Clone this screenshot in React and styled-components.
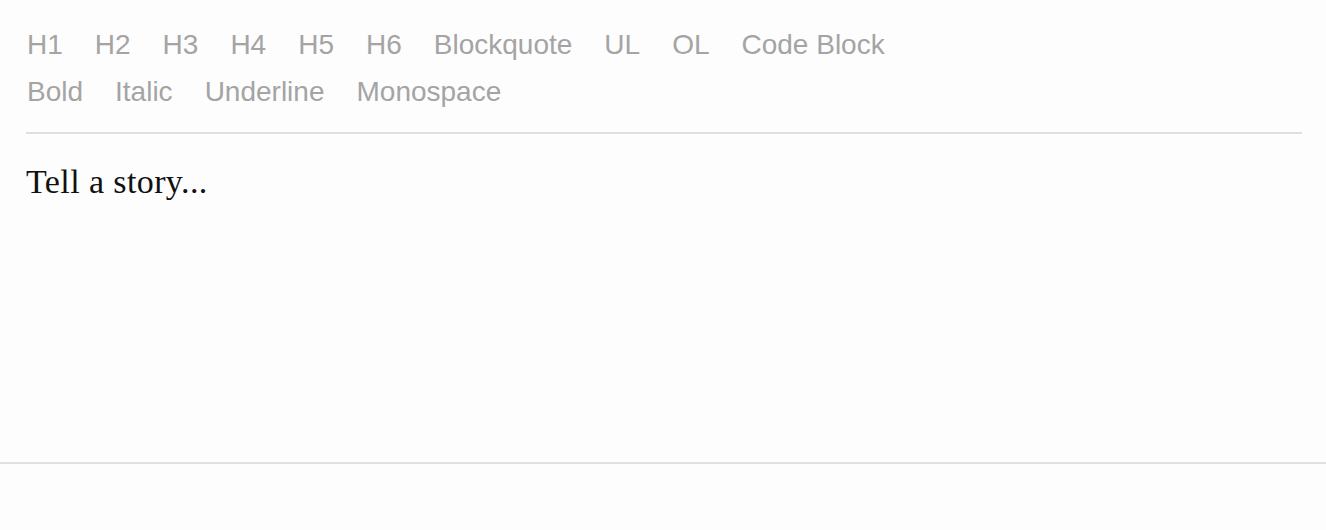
import React, { useState } from 'react';
import styled, { createGlobalStyle } from 'styled-components';

const BLOCK_TYPES = ['H1', 'H2', 'H3', 'H4', 'H5', 'H6', 'Blockquote', 'UL', 'OL', 'Code Block'];
const INLINE_STYLES = ['Bold', 'Italic', 'Underline', 'Monospace'];

function StyleControls({ items, active, onToggle }) {
    return (
        <Controls>
            {items.map(label => (
                <StyleButton
                    key={label}
                    $active={active === label}
                    onMouseDown={(e) => { e.preventDefault(); onToggle(label); }}
                >
                    {label}
                </StyleButton>
            ))}
        </Controls>
    );
}

export default function App() {
    const [blockType, setBlockType] = useState(null);
    const [inlineStyle, setInlineStyle] = useState(null);

    return (
        <>
            <GlobalStyle />
            <EditorRoot>
                <StyleControls
                    items={BLOCK_TYPES}
                    active={blockType}
                    onToggle={(t) => setBlockType(blockType === t ? null : t)}
                />
                <StyleControls
                    items={INLINE_STYLES}
                    active={inlineStyle}
                    onToggle={(s) => setInlineStyle(inlineStyle === s ? null : s)}
                />
                <EditorArea>
                    <Placeholder>Tell a story...</Placeholder>
                </EditorArea>
            </EditorRoot>
        </>
    );
}

// - estilos

const GlobalStyle = createGlobalStyle`
  html, body {
    margin: 0;
    padding: 0;
    background: #fdfdfd;
  }
`;

const EditorRoot = styled.div`
  background: #fdfdfd;
  border-bottom: 2px solid #e0e0e0;
  padding: 25px 24px 0 26px;
  height: 464px;
  box-sizing: border-box;
  font-family: "Liberation Serif", Georgia, serif;
`;

const Controls = styled.div`
  font-family: "Liberation Sans", Helvetica, Arial, sans-serif;
  font-size: 28px;
  line-height: 31px;
  margin-bottom: 8px;
  padding-left: 1px;
  user-select: none;
  display: flex;
  gap: 32px;
`;

const StyleButton = styled.span`
  color: ${props => props.$active ? '#5890ff' : '#a4a4a4'};
  cursor: pointer;
  padding: 4px 0;
  display: inline-block;
`;

const EditorArea = styled.div`
  border-top: 2px solid #e0e0e0;
  margin-top: 21px;
  cursor: text;
  padding-top: 29px;
`;

const Placeholder = styled.div`
  color: #111;
  font-size: 34px;
  line-height: 38px;
  letter-spacing: 0.4px;
`;
